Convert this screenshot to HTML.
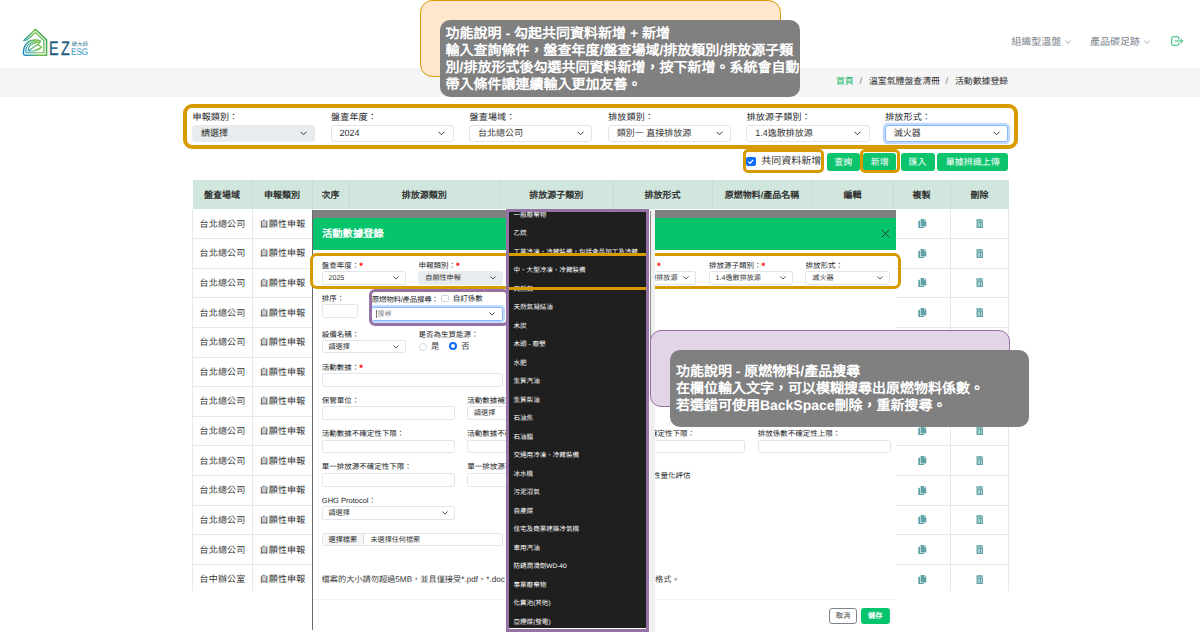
<!DOCTYPE html>
<html lang="zh-TW"><head><meta charset="utf-8"><title>活動數據登錄</title>
<style>
*{box-sizing:border-box;margin:0;padding:0}
html,body{width:1200px;height:632px;overflow:hidden;background:#fff}
body{position:relative;font-family:"Liberation Sans",sans-serif;color:#212529;font-size:9px;line-height:1;text-rendering:geometricPrecision}
.a{position:absolute;white-space:nowrap}
.t{position:absolute;white-space:nowrap;overflow:hidden}
.lbl{position:absolute;white-space:nowrap;font-size:9px;line-height:11px;height:11px;color:#212529;letter-spacing:.15px}
.sel{position:absolute;height:17px;border:1px solid #e1e5e9;border-radius:3px;background:#fff;font-size:9px;line-height:15px;padding-left:8px;white-space:nowrap;overflow:hidden;color:#333}
.sel.dis{background:#e9ecef;border-color:#e9ecef}
.chev{position:absolute;right:7.5px;top:50%;width:7px;height:5px;margin-top:-2px}
.btn{position:absolute;top:152.5px;height:18px;border-radius:3px;background:#0acf83;background:#0bc46c;color:#fff;font-size:9px;line-height:18px;text-align:center;white-space:nowrap;overflow:hidden}
.th{position:absolute;top:179.5px;height:29px;line-height:30.8px;text-align:center;font-weight:bold;font-size:9px;color:#333;white-space:nowrap;overflow:hidden;border-right:1px solid #c8dcd3}
.td{position:absolute;height:29.6px;line-height:31.4px;text-align:center;font-size:9px;color:#333;white-space:nowrap;overflow:hidden;letter-spacing:.15px}
.hl{position:absolute;left:192.5px;width:816px;height:1px;background:#e6e9ee}
.vl{position:absolute;width:1px;background:#e6e9ee}
.ml{position:absolute;white-space:nowrap;font-size:7.5px;line-height:10px;height:10px;color:#212529;overflow:hidden}
.ml i{color:#f00;font-style:normal;font-weight:bold;font-size:9.5px;line-height:0;position:relative;top:1.2px}
.mi{position:absolute;height:13px;border:1px solid #e1e5e9;border-radius:2.5px;background:#fff;font-size:7.1px;line-height:11px;padding-left:6px;white-space:nowrap;overflow:hidden;color:#333}
.mi.dis{background:#e9ecef;border-color:#e9ecef}
.mi .chev{right:6.2px;width:6px;height:4px}
.it{position:absolute;left:4.5px;white-space:nowrap;font-size:6.55px;line-height:9px;height:9px;color:#fff}
.gold{position:absolute;border:4px solid #d79b00;border-radius:9px}
.callt{position:absolute;background:#808080;border-radius:10px;color:#fff;font-weight:bold;font-size:14px;line-height:17px;white-space:nowrap;overflow:hidden}
.callt div{height:17px;white-space:nowrap}
</style></head><body>

<!-- logo -->
<svg class="a" style="left:20px;top:26px;width:32px;height:32px" viewBox="20 26 32 32">
<defs><linearGradient id="lg" gradientUnits="userSpaceOnUse" x1="22" y1="48" x2="47" y2="40"><stop offset="0" stop-color="#2688c8"/><stop offset=".3" stop-color="#3aa890"/><stop offset=".6" stop-color="#74c043"/><stop offset="1" stop-color="#35a052"/></linearGradient></defs>
<path d="M23.9 40.5 L35.44 29.4 L46.55 39.9 L46.55 55.35 L25.6 55.35 Q23.2 55.35 23.4 52.3 Q23.8 45.2 28.3 41.8 Q31.2 39.9 36.2 40.1 Q39 40.3 40.6 41.3" fill="none" stroke="url(#lg)" stroke-width="1.5" stroke-linejoin="round" stroke-linecap="round"/>
<path d="M24.2 40.45 L27 39.9 L35.44 32.7 L43.9 40.6 L43.9 52.7 L26.7 52.7 Q25.5 52.7 25.8 50 Q26.6 44.8 31.4 42.5 Q34 41.500 37.2 41.600" fill="none" stroke="url(#lg)" stroke-width="1.15" stroke-linejoin="round" stroke-linecap="round"/>
<path d="M28 50.2 Q28.800 44.6 34.2 43.2 Q37.4 42.500 40.2 41.700 Q39.200 43.600 37.5 44.500 L41.700 47.300 Q38.200 50.300 35 50.800 L28.6 51 M28.3 50.600 Q33.200 47.800 37.5 44.500 M34.8 50.800 Q38 48.800 41.700 47.300" fill="none" stroke="url(#lg)" stroke-width="1.05" stroke-linejoin="round" stroke-linecap="round"/>
</svg>
<div class="a" style="left:49.3px;top:38.8px;font-size:19.5px;line-height:20px;color:#1d5a7c;letter-spacing:3.2px;transform:scaleX(.74);transform-origin:0 0;-webkit-text-stroke:.3px #1d5a7c">EZ</div>
<div class="a" style="left:71.6px;top:42px;font-size:5.5px;line-height:6px;color:#3a7f95;letter-spacing:0">碳大師</div>
<div class="a" style="left:71.3px;top:48.2px;font-size:9.6px;line-height:10px;color:#2d94b8;letter-spacing:-.1px;transform:scaleX(.86);transform-origin:0 0">ESG</div>

<div class="a" style="left:1011.3px;top:36.5px;font-size:10px;line-height:12px;color:#7b838b">組織型溫盤</div>
<svg class="a" style="left:1065.3px;top:39.8px;width:6.4px;height:4.2px" viewBox="0 0 12 8"><path d="M1 1 L6 6.5 L11 1" fill="none" stroke="#8a9198" stroke-width="1.4"/></svg>
<div class="a" style="left:1090px;top:36.5px;font-size:10px;line-height:12px;color:#7b838b">產品碳足跡</div>
<svg class="a" style="left:1143.8px;top:39.8px;width:6.4px;height:4.2px" viewBox="0 0 12 8"><path d="M1 1 L6 6.5 L11 1" fill="none" stroke="#8a9198" stroke-width="1.4"/></svg>
<svg class="a" style="left:1171px;top:36px;width:12.5px;height:10px" viewBox="0 0 25 20"><path d="M15.5 6 V3.2 Q15.5 1.5 13.8 1.5 H3.2 Q1.5 1.5 1.5 3.2 V16.8 Q1.5 18.5 3.2 18.5 H13.8 Q15.5 18.5 15.5 16.8 V14" fill="none" stroke="#22b86c" stroke-width="2" stroke-linecap="round"/><path d="M8 10 H23 M19.3 6 L23.3 10 L19.3 14" fill="none" stroke="#22b86c" stroke-width="2" stroke-linecap="round" stroke-linejoin="round"/></svg>

<div class="a" style="left:0;top:68.3px;width:1200px;height:28.4px;background:#f5f5f5"></div>
<div class="a" style="left:836px;top:76px;font-size:8.9px;line-height:11px;color:#14b866">首頁</div>
<div class="a" style="left:859.5px;top:76px;font-size:8.9px;line-height:11px;color:#6c757d">/</div>
<div class="a" style="left:869px;top:76px;font-size:8.9px;line-height:11px;color:#333">溫室氣體盤查清冊</div>
<div class="a" style="left:945.5px;top:76px;font-size:8.9px;line-height:11px;color:#6c757d">/</div>
<div class="a" style="left:955px;top:76px;font-size:8.9px;line-height:11px;color:#333">活動數據登錄</div>

<div class="lbl" style="left:192.5px;top:112px">申報類別：</div>
<div class="sel dis" style="left:192.0px;top:124.8px;width:123.4px">請選擇<svg class="chev" viewBox="0 0 14 9"><path d="M1.5 1.5 L7 7 L12.5 1.5" fill="none" stroke="#343a40" stroke-width="2" stroke-linecap="round" stroke-linejoin="round"/></svg></div>
<div class="lbl" style="left:331.1px;top:112px">盤查年度：</div>
<div class="sel" style="left:330.6px;top:124.8px;width:123.4px">2024<svg class="chev" viewBox="0 0 14 9"><path d="M1.5 1.5 L7 7 L12.5 1.5" fill="none" stroke="#343a40" stroke-width="2" stroke-linecap="round" stroke-linejoin="round"/></svg></div>
<div class="lbl" style="left:469.6px;top:112px">盤查場域：</div>
<div class="sel" style="left:469.1px;top:124.8px;width:123.4px">台北總公司<svg class="chev" viewBox="0 0 14 9"><path d="M1.5 1.5 L7 7 L12.5 1.5" fill="none" stroke="#343a40" stroke-width="2" stroke-linecap="round" stroke-linejoin="round"/></svg></div>
<div class="lbl" style="left:608.2px;top:112px">排放類別：</div>
<div class="sel" style="left:607.7px;top:124.8px;width:123.4px">類別一 直接排放源<svg class="chev" viewBox="0 0 14 9"><path d="M1.5 1.5 L7 7 L12.5 1.5" fill="none" stroke="#343a40" stroke-width="2" stroke-linecap="round" stroke-linejoin="round"/></svg></div>
<div class="lbl" style="left:746.7px;top:112px">排放源子類別：</div>
<div class="sel" style="left:746.2px;top:124.8px;width:123.4px">1.4逸散排放源<svg class="chev" viewBox="0 0 14 9"><path d="M1.5 1.5 L7 7 L12.5 1.5" fill="none" stroke="#343a40" stroke-width="2" stroke-linecap="round" stroke-linejoin="round"/></svg></div>
<div class="lbl" style="left:885.2px;top:112px">排放形式：</div>
<div class="sel" style="left:884.8px;top:124.8px;width:123.4px;border-color:#86b7fe;box-shadow:0 0 0 2.2px rgba(13,110,253,.25)">滅火器<svg class="chev" viewBox="0 0 14 9"><path d="M1.5 1.5 L7 7 L12.5 1.5" fill="none" stroke="#343a40" stroke-width="2" stroke-linecap="round" stroke-linejoin="round"/></svg></div>
<div class="a" style="left:746.3px;top:156.8px;width:9.4px;height:9.4px;border-radius:2px;background:#0d6efd"></div>
<svg class="a" style="left:746.3px;top:156.8px;width:9.4px;height:9.4px" viewBox="0 0 20 20"><path d="M5.5 10.3 L8.7 13.5 L14.6 6.8" fill="none" stroke="#fff" stroke-width="2.6" stroke-linecap="round" stroke-linejoin="round"/></svg>
<div class="a" style="left:761.2px;top:156.2px;font-size:10px;line-height:12px;color:#333">共同資料新增</div>
<div class="btn" style="left:826.8px;width:32.8px">查詢</div>
<div class="btn" style="left:863.3px;width:33px">新增</div>
<div class="btn" style="left:900.5px;width:34px">匯入</div>
<div class="btn" style="left:937px;width:71.3px">單據辨識上傳</div>

<div class="a" style="left:192.5px;top:179.5px;width:816.2px;height:29.1px;background:#d1e7dd"></div>
<div class="th" style="left:192.5px;width:60.0px">盤查場域</div>
<div class="th" style="left:252.5px;width:60.0px">申報類別</div>
<div class="th" style="left:312.5px;width:37.0px">次序</div>
<div class="th" style="left:349.5px;width:150.5px">排放源類別</div>
<div class="th" style="left:500px;width:113.5px">排放源子類別</div>
<div class="th" style="left:613.5px;width:99.0px">排放形式</div>
<div class="th" style="left:712.5px;width:100.0px">原燃物料/產品名稱</div>
<div class="th" style="left:812.5px;width:81.0px">編輯</div>
<div class="th" style="left:893.5px;width:57.0px">複製</div>
<div class="th" style="left:950.5px;width:58.2px;border-right:none">刪除</div>
<div class="td" style="left:192.5px;top:208.6px;width:60px">台北總公司</div>
<div class="td" style="left:252.5px;top:208.6px;width:60px">自願性申報</div>
<div class="hl" style="top:238.0px"></div>
<svg class="a" style="left:918px;top:218.9px;width:8.6px;height:9.2px" viewBox="0 0 448 512"><path fill="#5fa2a6" d="M320 448v40c0 13.3-10.7 24-24 24H24c-13.3 0-24-10.7-24-24V120c0-13.3 10.7-24 24-24h72v296c0 30.9 25.1 56 56 56h168zm0-344V0H152c-13.3 0-24 10.700-24 24v368c0 13.3 10.700 24 24 24h272c13.300 0 24-10.700 24-24V128H344c-13.200 0-24-10.800-24-24zm121-31L375 7A24 24 0 0 0 358.100 0H352v96h96v-6.100a24 24 0 0 0-7-16.900z"/></svg>
<svg class="a" style="left:975.7px;top:218.9px;width:7.500px;height:9.2px" preserveAspectRatio="none" viewBox="0 0 448 512"><path fill="#5fa2a6" d="M32 464a48 48 0 0 0 48 48h288a48 48 0 0 0 48-48V128H32zm272-256a16 16 0 0 1 32 0v224a16 16 0 0 1-32 0zm-96 0a16 16 0 0 1 32 0v224a16 16 0 0 1-32 0zm-96 0a16 16 0 0 1 32 0v224a16 16 0 0 1-32 0zM432 32H312l-9.400-18.700A24 24 0 0 0 281.100 0H166.800a23.720 23.720 0 0 0-21.400 13.300L136 32H16A16 16 0 0 0 0 48v32a16 16 0 0 0 16 16h416a16 16 0 0 0 16-16V48a16 16 0 0 0-16-16z"/></svg>
<div class="td" style="left:192.5px;top:238.2px;width:60px">台北總公司</div>
<div class="td" style="left:252.5px;top:238.2px;width:60px">自願性申報</div>
<div class="hl" style="top:267.7px"></div>
<svg class="a" style="left:918px;top:248.5px;width:8.6px;height:9.2px" viewBox="0 0 448 512"><path fill="#5fa2a6" d="M320 448v40c0 13.3-10.7 24-24 24H24c-13.3 0-24-10.7-24-24V120c0-13.3 10.7-24 24-24h72v296c0 30.9 25.1 56 56 56h168zm0-344V0H152c-13.3 0-24 10.700-24 24v368c0 13.3 10.700 24 24 24h272c13.300 0 24-10.700 24-24V128H344c-13.200 0-24-10.800-24-24zm121-31L375 7A24 24 0 0 0 358.100 0H352v96h96v-6.100a24 24 0 0 0-7-16.900z"/></svg>
<svg class="a" style="left:975.7px;top:248.5px;width:7.500px;height:9.2px" preserveAspectRatio="none" viewBox="0 0 448 512"><path fill="#5fa2a6" d="M32 464a48 48 0 0 0 48 48h288a48 48 0 0 0 48-48V128H32zm272-256a16 16 0 0 1 32 0v224a16 16 0 0 1-32 0zm-96 0a16 16 0 0 1 32 0v224a16 16 0 0 1-32 0zm-96 0a16 16 0 0 1 32 0v224a16 16 0 0 1-32 0zM432 32H312l-9.400-18.700A24 24 0 0 0 281.100 0H166.800a23.720 23.720 0 0 0-21.400 13.300L136 32H16A16 16 0 0 0 0 48v32a16 16 0 0 0 16 16h416a16 16 0 0 0 16-16V48a16 16 0 0 0-16-16z"/></svg>
<div class="td" style="left:192.5px;top:267.9px;width:60px">台北總公司</div>
<div class="td" style="left:252.5px;top:267.9px;width:60px">自願性申報</div>
<div class="hl" style="top:297.3px"></div>
<svg class="a" style="left:918px;top:278.2px;width:8.6px;height:9.2px" viewBox="0 0 448 512"><path fill="#5fa2a6" d="M320 448v40c0 13.3-10.7 24-24 24H24c-13.3 0-24-10.7-24-24V120c0-13.3 10.7-24 24-24h72v296c0 30.9 25.1 56 56 56h168zm0-344V0H152c-13.3 0-24 10.700-24 24v368c0 13.3 10.700 24 24 24h272c13.300 0 24-10.700 24-24V128H344c-13.200 0-24-10.800-24-24zm121-31L375 7A24 24 0 0 0 358.100 0H352v96h96v-6.100a24 24 0 0 0-7-16.900z"/></svg>
<svg class="a" style="left:975.7px;top:278.2px;width:7.500px;height:9.2px" preserveAspectRatio="none" viewBox="0 0 448 512"><path fill="#5fa2a6" d="M32 464a48 48 0 0 0 48 48h288a48 48 0 0 0 48-48V128H32zm272-256a16 16 0 0 1 32 0v224a16 16 0 0 1-32 0zm-96 0a16 16 0 0 1 32 0v224a16 16 0 0 1-32 0zm-96 0a16 16 0 0 1 32 0v224a16 16 0 0 1-32 0zM432 32H312l-9.400-18.700A24 24 0 0 0 281.100 0H166.800a23.720 23.720 0 0 0-21.400 13.300L136 32H16A16 16 0 0 0 0 48v32a16 16 0 0 0 16 16h416a16 16 0 0 0 16-16V48a16 16 0 0 0-16-16z"/></svg>
<div class="td" style="left:192.5px;top:297.5px;width:60px">台北總公司</div>
<div class="td" style="left:252.5px;top:297.5px;width:60px">自願性申報</div>
<div class="hl" style="top:326.9px"></div>
<svg class="a" style="left:918px;top:307.8px;width:8.6px;height:9.2px" viewBox="0 0 448 512"><path fill="#5fa2a6" d="M320 448v40c0 13.3-10.7 24-24 24H24c-13.3 0-24-10.7-24-24V120c0-13.3 10.7-24 24-24h72v296c0 30.9 25.1 56 56 56h168zm0-344V0H152c-13.3 0-24 10.700-24 24v368c0 13.3 10.700 24 24 24h272c13.300 0 24-10.700 24-24V128H344c-13.200 0-24-10.800-24-24zm121-31L375 7A24 24 0 0 0 358.100 0H352v96h96v-6.100a24 24 0 0 0-7-16.900z"/></svg>
<svg class="a" style="left:975.7px;top:307.8px;width:7.500px;height:9.2px" preserveAspectRatio="none" viewBox="0 0 448 512"><path fill="#5fa2a6" d="M32 464a48 48 0 0 0 48 48h288a48 48 0 0 0 48-48V128H32zm272-256a16 16 0 0 1 32 0v224a16 16 0 0 1-32 0zm-96 0a16 16 0 0 1 32 0v224a16 16 0 0 1-32 0zm-96 0a16 16 0 0 1 32 0v224a16 16 0 0 1-32 0zM432 32H312l-9.400-18.700A24 24 0 0 0 281.100 0H166.800a23.720 23.720 0 0 0-21.400 13.300L136 32H16A16 16 0 0 0 0 48v32a16 16 0 0 0 16 16h416a16 16 0 0 0 16-16V48a16 16 0 0 0-16-16z"/></svg>
<div class="td" style="left:192.5px;top:327.1px;width:60px">台北總公司</div>
<div class="td" style="left:252.5px;top:327.1px;width:60px">自願性申報</div>
<div class="hl" style="top:356.6px"></div>
<svg class="a" style="left:918px;top:337.4px;width:8.6px;height:9.2px" viewBox="0 0 448 512"><path fill="#5fa2a6" d="M320 448v40c0 13.3-10.7 24-24 24H24c-13.3 0-24-10.7-24-24V120c0-13.3 10.7-24 24-24h72v296c0 30.9 25.1 56 56 56h168zm0-344V0H152c-13.3 0-24 10.700-24 24v368c0 13.3 10.700 24 24 24h272c13.300 0 24-10.700 24-24V128H344c-13.200 0-24-10.800-24-24zm121-31L375 7A24 24 0 0 0 358.100 0H352v96h96v-6.100a24 24 0 0 0-7-16.900z"/></svg>
<svg class="a" style="left:975.7px;top:337.4px;width:7.500px;height:9.2px" preserveAspectRatio="none" viewBox="0 0 448 512"><path fill="#5fa2a6" d="M32 464a48 48 0 0 0 48 48h288a48 48 0 0 0 48-48V128H32zm272-256a16 16 0 0 1 32 0v224a16 16 0 0 1-32 0zm-96 0a16 16 0 0 1 32 0v224a16 16 0 0 1-32 0zm-96 0a16 16 0 0 1 32 0v224a16 16 0 0 1-32 0zM432 32H312l-9.400-18.700A24 24 0 0 0 281.100 0H166.800a23.720 23.720 0 0 0-21.400 13.300L136 32H16A16 16 0 0 0 0 48v32a16 16 0 0 0 16 16h416a16 16 0 0 0 16-16V48a16 16 0 0 0-16-16z"/></svg>
<div class="td" style="left:192.5px;top:356.8px;width:60px">台北總公司</div>
<div class="td" style="left:252.5px;top:356.8px;width:60px">自願性申報</div>
<div class="hl" style="top:386.2px"></div>
<svg class="a" style="left:918px;top:367.1px;width:8.6px;height:9.2px" viewBox="0 0 448 512"><path fill="#5fa2a6" d="M320 448v40c0 13.3-10.7 24-24 24H24c-13.3 0-24-10.7-24-24V120c0-13.3 10.7-24 24-24h72v296c0 30.9 25.1 56 56 56h168zm0-344V0H152c-13.3 0-24 10.700-24 24v368c0 13.3 10.700 24 24 24h272c13.300 0 24-10.700 24-24V128H344c-13.200 0-24-10.800-24-24zm121-31L375 7A24 24 0 0 0 358.100 0H352v96h96v-6.100a24 24 0 0 0-7-16.900z"/></svg>
<svg class="a" style="left:975.7px;top:367.1px;width:7.500px;height:9.2px" preserveAspectRatio="none" viewBox="0 0 448 512"><path fill="#5fa2a6" d="M32 464a48 48 0 0 0 48 48h288a48 48 0 0 0 48-48V128H32zm272-256a16 16 0 0 1 32 0v224a16 16 0 0 1-32 0zm-96 0a16 16 0 0 1 32 0v224a16 16 0 0 1-32 0zm-96 0a16 16 0 0 1 32 0v224a16 16 0 0 1-32 0zM432 32H312l-9.400-18.700A24 24 0 0 0 281.100 0H166.800a23.720 23.720 0 0 0-21.400 13.300L136 32H16A16 16 0 0 0 0 48v32a16 16 0 0 0 16 16h416a16 16 0 0 0 16-16V48a16 16 0 0 0-16-16z"/></svg>
<div class="td" style="left:192.5px;top:386.4px;width:60px">台北總公司</div>
<div class="td" style="left:252.5px;top:386.4px;width:60px">自願性申報</div>
<div class="hl" style="top:415.8px"></div>
<svg class="a" style="left:918px;top:396.7px;width:8.6px;height:9.2px" viewBox="0 0 448 512"><path fill="#5fa2a6" d="M320 448v40c0 13.3-10.7 24-24 24H24c-13.3 0-24-10.7-24-24V120c0-13.3 10.7-24 24-24h72v296c0 30.9 25.1 56 56 56h168zm0-344V0H152c-13.3 0-24 10.700-24 24v368c0 13.3 10.700 24 24 24h272c13.300 0 24-10.700 24-24V128H344c-13.200 0-24-10.800-24-24zm121-31L375 7A24 24 0 0 0 358.100 0H352v96h96v-6.100a24 24 0 0 0-7-16.900z"/></svg>
<svg class="a" style="left:975.7px;top:396.7px;width:7.500px;height:9.2px" preserveAspectRatio="none" viewBox="0 0 448 512"><path fill="#5fa2a6" d="M32 464a48 48 0 0 0 48 48h288a48 48 0 0 0 48-48V128H32zm272-256a16 16 0 0 1 32 0v224a16 16 0 0 1-32 0zm-96 0a16 16 0 0 1 32 0v224a16 16 0 0 1-32 0zm-96 0a16 16 0 0 1 32 0v224a16 16 0 0 1-32 0zM432 32H312l-9.400-18.700A24 24 0 0 0 281.100 0H166.800a23.720 23.720 0 0 0-21.400 13.300L136 32H16A16 16 0 0 0 0 48v32a16 16 0 0 0 16 16h416a16 16 0 0 0 16-16V48a16 16 0 0 0-16-16z"/></svg>
<div class="td" style="left:192.5px;top:416.0px;width:60px">台北總公司</div>
<div class="td" style="left:252.5px;top:416.0px;width:60px">自願性申報</div>
<div class="hl" style="top:445.4px"></div>
<svg class="a" style="left:918px;top:426.3px;width:8.6px;height:9.2px" viewBox="0 0 448 512"><path fill="#5fa2a6" d="M320 448v40c0 13.3-10.7 24-24 24H24c-13.3 0-24-10.7-24-24V120c0-13.3 10.7-24 24-24h72v296c0 30.9 25.1 56 56 56h168zm0-344V0H152c-13.3 0-24 10.700-24 24v368c0 13.3 10.700 24 24 24h272c13.300 0 24-10.700 24-24V128H344c-13.200 0-24-10.800-24-24zm121-31L375 7A24 24 0 0 0 358.100 0H352v96h96v-6.100a24 24 0 0 0-7-16.900z"/></svg>
<svg class="a" style="left:975.7px;top:426.3px;width:7.500px;height:9.2px" preserveAspectRatio="none" viewBox="0 0 448 512"><path fill="#5fa2a6" d="M32 464a48 48 0 0 0 48 48h288a48 48 0 0 0 48-48V128H32zm272-256a16 16 0 0 1 32 0v224a16 16 0 0 1-32 0zm-96 0a16 16 0 0 1 32 0v224a16 16 0 0 1-32 0zm-96 0a16 16 0 0 1 32 0v224a16 16 0 0 1-32 0zM432 32H312l-9.400-18.700A24 24 0 0 0 281.100 0H166.800a23.720 23.720 0 0 0-21.400 13.300L136 32H16A16 16 0 0 0 0 48v32a16 16 0 0 0 16 16h416a16 16 0 0 0 16-16V48a16 16 0 0 0-16-16z"/></svg>
<div class="td" style="left:192.5px;top:445.6px;width:60px">台北總公司</div>
<div class="td" style="left:252.5px;top:445.6px;width:60px">自願性申報</div>
<div class="hl" style="top:475.1px"></div>
<svg class="a" style="left:918px;top:455.9px;width:8.6px;height:9.2px" viewBox="0 0 448 512"><path fill="#5fa2a6" d="M320 448v40c0 13.3-10.7 24-24 24H24c-13.3 0-24-10.7-24-24V120c0-13.3 10.7-24 24-24h72v296c0 30.9 25.1 56 56 56h168zm0-344V0H152c-13.3 0-24 10.700-24 24v368c0 13.3 10.700 24 24 24h272c13.300 0 24-10.700 24-24V128H344c-13.200 0-24-10.800-24-24zm121-31L375 7A24 24 0 0 0 358.100 0H352v96h96v-6.100a24 24 0 0 0-7-16.900z"/></svg>
<svg class="a" style="left:975.7px;top:455.9px;width:7.500px;height:9.2px" preserveAspectRatio="none" viewBox="0 0 448 512"><path fill="#5fa2a6" d="M32 464a48 48 0 0 0 48 48h288a48 48 0 0 0 48-48V128H32zm272-256a16 16 0 0 1 32 0v224a16 16 0 0 1-32 0zm-96 0a16 16 0 0 1 32 0v224a16 16 0 0 1-32 0zm-96 0a16 16 0 0 1 32 0v224a16 16 0 0 1-32 0zM432 32H312l-9.400-18.700A24 24 0 0 0 281.100 0H166.800a23.720 23.720 0 0 0-21.400 13.300L136 32H16A16 16 0 0 0 0 48v32a16 16 0 0 0 16 16h416a16 16 0 0 0 16-16V48a16 16 0 0 0-16-16z"/></svg>
<div class="td" style="left:192.5px;top:475.3px;width:60px">台北總公司</div>
<div class="td" style="left:252.5px;top:475.3px;width:60px">自願性申報</div>
<div class="hl" style="top:504.7px"></div>
<svg class="a" style="left:918px;top:485.6px;width:8.6px;height:9.2px" viewBox="0 0 448 512"><path fill="#5fa2a6" d="M320 448v40c0 13.3-10.7 24-24 24H24c-13.3 0-24-10.7-24-24V120c0-13.3 10.7-24 24-24h72v296c0 30.9 25.1 56 56 56h168zm0-344V0H152c-13.3 0-24 10.700-24 24v368c0 13.3 10.700 24 24 24h272c13.300 0 24-10.700 24-24V128H344c-13.200 0-24-10.800-24-24zm121-31L375 7A24 24 0 0 0 358.100 0H352v96h96v-6.100a24 24 0 0 0-7-16.900z"/></svg>
<svg class="a" style="left:975.7px;top:485.6px;width:7.500px;height:9.2px" preserveAspectRatio="none" viewBox="0 0 448 512"><path fill="#5fa2a6" d="M32 464a48 48 0 0 0 48 48h288a48 48 0 0 0 48-48V128H32zm272-256a16 16 0 0 1 32 0v224a16 16 0 0 1-32 0zm-96 0a16 16 0 0 1 32 0v224a16 16 0 0 1-32 0zm-96 0a16 16 0 0 1 32 0v224a16 16 0 0 1-32 0zM432 32H312l-9.400-18.700A24 24 0 0 0 281.100 0H166.800a23.720 23.720 0 0 0-21.400 13.300L136 32H16A16 16 0 0 0 0 48v32a16 16 0 0 0 16 16h416a16 16 0 0 0 16-16V48a16 16 0 0 0-16-16z"/></svg>
<div class="td" style="left:192.5px;top:504.9px;width:60px">台北總公司</div>
<div class="td" style="left:252.5px;top:504.9px;width:60px">自願性申報</div>
<div class="hl" style="top:534.3px"></div>
<svg class="a" style="left:918px;top:515.2px;width:8.6px;height:9.2px" viewBox="0 0 448 512"><path fill="#5fa2a6" d="M320 448v40c0 13.3-10.7 24-24 24H24c-13.3 0-24-10.7-24-24V120c0-13.3 10.7-24 24-24h72v296c0 30.9 25.1 56 56 56h168zm0-344V0H152c-13.3 0-24 10.700-24 24v368c0 13.3 10.700 24 24 24h272c13.300 0 24-10.700 24-24V128H344c-13.200 0-24-10.800-24-24zm121-31L375 7A24 24 0 0 0 358.100 0H352v96h96v-6.100a24 24 0 0 0-7-16.900z"/></svg>
<svg class="a" style="left:975.7px;top:515.2px;width:7.500px;height:9.2px" preserveAspectRatio="none" viewBox="0 0 448 512"><path fill="#5fa2a6" d="M32 464a48 48 0 0 0 48 48h288a48 48 0 0 0 48-48V128H32zm272-256a16 16 0 0 1 32 0v224a16 16 0 0 1-32 0zm-96 0a16 16 0 0 1 32 0v224a16 16 0 0 1-32 0zm-96 0a16 16 0 0 1 32 0v224a16 16 0 0 1-32 0zM432 32H312l-9.400-18.700A24 24 0 0 0 281.100 0H166.800a23.720 23.720 0 0 0-21.400 13.300L136 32H16A16 16 0 0 0 0 48v32a16 16 0 0 0 16 16h416a16 16 0 0 0 16-16V48a16 16 0 0 0-16-16z"/></svg>
<div class="td" style="left:192.5px;top:534.5px;width:60px">台北總公司</div>
<div class="td" style="left:252.5px;top:534.5px;width:60px">自願性申報</div>
<div class="hl" style="top:564.0px"></div>
<svg class="a" style="left:918px;top:544.8px;width:8.6px;height:9.2px" viewBox="0 0 448 512"><path fill="#5fa2a6" d="M320 448v40c0 13.3-10.7 24-24 24H24c-13.3 0-24-10.7-24-24V120c0-13.3 10.7-24 24-24h72v296c0 30.9 25.1 56 56 56h168zm0-344V0H152c-13.3 0-24 10.700-24 24v368c0 13.3 10.700 24 24 24h272c13.300 0 24-10.700 24-24V128H344c-13.200 0-24-10.800-24-24zm121-31L375 7A24 24 0 0 0 358.100 0H352v96h96v-6.100a24 24 0 0 0-7-16.900z"/></svg>
<svg class="a" style="left:975.7px;top:544.8px;width:7.500px;height:9.2px" preserveAspectRatio="none" viewBox="0 0 448 512"><path fill="#5fa2a6" d="M32 464a48 48 0 0 0 48 48h288a48 48 0 0 0 48-48V128H32zm272-256a16 16 0 0 1 32 0v224a16 16 0 0 1-32 0zm-96 0a16 16 0 0 1 32 0v224a16 16 0 0 1-32 0zm-96 0a16 16 0 0 1 32 0v224a16 16 0 0 1-32 0zM432 32H312l-9.400-18.700A24 24 0 0 0 281.100 0H166.800a23.720 23.720 0 0 0-21.400 13.300L136 32H16A16 16 0 0 0 0 48v32a16 16 0 0 0 16 16h416a16 16 0 0 0 16-16V48a16 16 0 0 0-16-16z"/></svg>
<div class="td" style="left:192.5px;top:564.2px;width:60px;height:26.4px">台中辦公室</div>
<div class="td" style="left:252.5px;top:564.2px;width:60px;height:26.4px">自願性申報</div>
<svg class="a" style="left:918px;top:574.5px;width:8.6px;height:9.2px" viewBox="0 0 448 512"><path fill="#5fa2a6" d="M320 448v40c0 13.3-10.7 24-24 24H24c-13.3 0-24-10.7-24-24V120c0-13.3 10.7-24 24-24h72v296c0 30.9 25.1 56 56 56h168zm0-344V0H152c-13.3 0-24 10.700-24 24v368c0 13.3 10.700 24 24 24h272c13.300 0 24-10.700 24-24V128H344c-13.200 0-24-10.800-24-24zm121-31L375 7A24 24 0 0 0 358.100 0H352v96h96v-6.100a24 24 0 0 0-7-16.900z"/></svg>
<svg class="a" style="left:975.7px;top:574.5px;width:7.500px;height:9.2px" preserveAspectRatio="none" viewBox="0 0 448 512"><path fill="#5fa2a6" d="M32 464a48 48 0 0 0 48 48h288a48 48 0 0 0 48-48V128H32zm272-256a16 16 0 0 1 32 0v224a16 16 0 0 1-32 0zm-96 0a16 16 0 0 1 32 0v224a16 16 0 0 1-32 0zm-96 0a16 16 0 0 1 32 0v224a16 16 0 0 1-32 0zM432 32H312l-9.400-18.700A24 24 0 0 0 281.100 0H166.800a23.720 23.720 0 0 0-21.400 13.300L136 32H16A16 16 0 0 0 0 48v32a16 16 0 0 0 16 16h416a16 16 0 0 0 16-16V48a16 16 0 0 0-16-16z"/></svg>
<div class="vl" style="left:192.0px;top:208.6px;height:382px"></div>
<div class="vl" style="left:252.0px;top:208.6px;height:382px"></div>
<div class="vl" style="left:312.0px;top:208.6px;height:382px"></div>
<div class="vl" style="left:349.0px;top:208.6px;height:382px"></div>
<div class="vl" style="left:499.5px;top:208.6px;height:382px"></div>
<div class="vl" style="left:613.0px;top:208.6px;height:382px"></div>
<div class="vl" style="left:712.0px;top:208.6px;height:382px"></div>
<div class="vl" style="left:812.0px;top:208.6px;height:382px"></div>
<div class="vl" style="left:893.0px;top:208.6px;height:382px"></div>
<div class="vl" style="left:950.0px;top:208.6px;height:382px"></div>
<div class="vl" style="left:1008.2px;top:208.6px;height:382px"></div>
<div class="a" style="left:180px;top:590.6px;width:840px;height:42px;background:#fff"></div>
<div class="a" id="modal" style="left:312px;top:210px;width:584px;height:422px;background:#fff;overflow:hidden">
<div class="a" style="left:0;top:0;width:584.5px;height:12px;background:#808080"></div>
<div class="a" style="left:0;top:0;width:1.2px;height:420px;background:#6b6b6b"></div>
<div class="a" style="left:1px;top:7.6px;width:583.5px;height:32.2px;background:#05c46b;border-radius:3px 0 0 0"></div>
<div class="a" style="left:10px;top:17.800px;font-size:10.3px;line-height:13px;font-weight:bold;color:#fff">活動數據登錄</div>
<svg class="a" style="left:568.5px;top:19px;width:9.2px;height:9.2px" viewBox="0 0 20 20"><path d="M1.5 1.5 L18.500 18.500 M18.500 1.500 L1.500 18.500" stroke="#2b3a33" stroke-width="2" fill="none"/></svg>

<div class="ml" style="left:9.8px;top:50.5px">盤查年度：<i>*</i></div>
<div class="mi" style="left:9.5px;top:61.0px;width:84.4px;height:13.7px;line-height:13.5px">2025<svg class="chev" viewBox="0 0 14 9"><path d="M1.5 1.5 L7 7 L12.5 1.5" fill="none" stroke="#343a40" stroke-width="2" stroke-linecap="round" stroke-linejoin="round"/></svg></div>
<div class="ml" style="left:106.6px;top:50.5px">申報類別：<i>*</i></div>
<div class="mi dis" style="left:106.3px;top:61.0px;width:84.4px;height:13.7px;line-height:13.5px">自願性申報<svg class="chev" viewBox="0 0 14 9"><path d="M1.5 1.5 L7 7 L12.5 1.5" fill="none" stroke="#343a40" stroke-width="2" stroke-linecap="round" stroke-linejoin="round"/></svg></div>
<div class="ml" style="left:203.3px;top:50.5px">盤查場域：<i>*</i></div>
<div class="mi" style="left:203.0px;top:61.0px;width:84.4px;height:13.7px;line-height:13.5px">台北總公司<svg class="chev" viewBox="0 0 14 9"><path d="M1.5 1.5 L7 7 L12.5 1.5" fill="none" stroke="#343a40" stroke-width="2" stroke-linecap="round" stroke-linejoin="round"/></svg></div>
<div class="ml" style="left:300.1px;top:50.5px">排放源類別：<i>*</i></div>
<div class="mi" style="left:299.8px;top:61.0px;width:84.4px;height:13.7px;line-height:13.5px">類別一 直接排放源<svg class="chev" viewBox="0 0 14 9"><path d="M1.5 1.5 L7 7 L12.5 1.5" fill="none" stroke="#343a40" stroke-width="2" stroke-linecap="round" stroke-linejoin="round"/></svg></div>
<div class="ml" style="left:396.9px;top:50.5px">排放源子類別：<i>*</i></div>
<div class="mi" style="left:396.6px;top:61.0px;width:84.4px;height:13.7px;line-height:13.5px">1.4逸散排放源<svg class="chev" viewBox="0 0 14 9"><path d="M1.5 1.5 L7 7 L12.5 1.5" fill="none" stroke="#343a40" stroke-width="2" stroke-linecap="round" stroke-linejoin="round"/></svg></div>
<div class="ml" style="left:493.6px;top:50.5px">排放形式：</div>
<div class="mi" style="left:493.3px;top:61.0px;width:84.4px;height:13.7px;line-height:13.5px">滅火器<svg class="chev" viewBox="0 0 14 9"><path d="M1.5 1.5 L7 7 L12.5 1.5" fill="none" stroke="#343a40" stroke-width="2" stroke-linecap="round" stroke-linejoin="round"/></svg></div>
<div class="ml" style="left:9.8px;top:84.2px">排序：</div>
<div class="mi" style="left:9.5px;top:94.2px;width:36.0px;height:14.0px;line-height:13.8px"></div>
<div class="ml" style="left:59.8px;top:84.5px;letter-spacing:-.28px">原燃物料/產品搜尋：</div>
<div class="a" style="left:129.4px;top:85.0px;width:7.2px;height:7.2px;border:1px solid #cfd4da;border-radius:1.5px;background:#fff"></div>
<div class="ml" style="left:140.8px;top:84.2px">自訂係數</div>
<div class="mi" style="left:59.0px;top:96.6px;width:131.5px;height:14.1px;line-height:13.9px;border-color:#86b7fe;box-shadow:0 0 0 2px rgba(13,110,253,.25)"><span style="color:#8a9097;border-left:0.700px solid #777;margin-left:-2px;padding-left:0.5px">搜尋</span><svg class="chev" viewBox="0 0 14 9"><path d="M1.5 1.5 L7 7 L12.5 1.5" fill="none" stroke="#343a40" stroke-width="2" stroke-linecap="round" stroke-linejoin="round"/></svg></div>
<div class="ml" style="left:9.8px;top:119.5px">設備名稱：</div>
<div class="mi" style="left:9.5px;top:130.0px;width:84.4px;height:13.3px;line-height:13.1px">請選擇<svg class="chev" viewBox="0 0 14 9"><path d="M1.5 1.5 L7 7 L12.5 1.5" fill="none" stroke="#343a40" stroke-width="2" stroke-linecap="round" stroke-linejoin="round"/></svg></div>
<div class="ml" style="left:106.6px;top:119.5px">是否為生質能源：</div>
<div class="a" style="left:106.6px;top:132.6px;width:8px;height:8px;border:1px solid #d5d9de;border-radius:50%;background:#fff"></div>
<div class="a" style="left:119.0px;top:131.4px;font-size:8.4px;line-height:10px;color:#333">是</div>
<div class="a" style="left:137.2px;top:132.4px;width:8px;height:8px;border:2.3px solid #0d6efd;border-radius:50%;background:#fff"></div>
<div class="a" style="left:149.3px;top:131.4px;font-size:8.4px;line-height:10px;color:#333">否</div>
<div class="ml" style="left:9.8px;top:152.5px">活動數據：<i>*</i></div>
<div class="mi" style="left:9.5px;top:163.0px;width:181.2px;height:13.5px;line-height:13.3px"></div>
<div class="ml" style="left:9.8px;top:185.9px">保管單位：</div>
<div class="mi" style="left:9.5px;top:196.4px;width:133.2px;height:14.0px;line-height:13.8px"></div>
<div class="ml" style="left:155.3px;top:185.9px">活動數據補充說明：</div>
<div class="mi" style="left:155.0px;top:196.4px;width:133.2px;height:14.0px;line-height:13.8px">請選擇<svg class="chev" viewBox="0 0 14 9"><path d="M1.5 1.5 L7 7 L12.5 1.5" fill="none" stroke="#343a40" stroke-width="2" stroke-linecap="round" stroke-linejoin="round"/></svg></div>
<div class="ml" style="left:9.8px;top:219.2px">活動數據不確定性下限：</div>
<div class="mi" style="left:9.5px;top:229.9px;width:133.0px;height:13.5px;line-height:13.3px"></div>
<div class="ml" style="left:155.3px;top:219.2px">活動數據不確定性上限：</div>
<div class="mi" style="left:155.0px;top:229.9px;width:133.0px;height:13.5px;line-height:13.3px"></div>
<div class="ml" style="left:300.5px;top:219.2px">排放係數不確定性下限：</div>
<div class="mi" style="left:300.2px;top:229.9px;width:133.0px;height:13.5px;line-height:13.3px"></div>
<div class="ml" style="left:445.8px;top:219.2px">排放係數不確定性上限：</div>
<div class="mi" style="left:445.5px;top:229.9px;width:133.0px;height:13.5px;line-height:13.3px"></div>
<div class="ml" style="left:9.8px;top:252.4px">單一排放源不確定性下限：</div>
<div class="mi" style="left:9.5px;top:263.1px;width:133.0px;height:13.5px;line-height:13.3px"></div>
<div class="ml" style="left:155.3px;top:252.4px">單一排放源不確定性上限：</div>
<div class="mi" style="left:155.0px;top:263.1px;width:133.0px;height:13.5px;line-height:13.3px"></div>
<div class="ml" style="left:248px;top:260.8px;width:130.5px;text-align:right">排放係數不確定性量化評估</div>
<div class="ml" style="left:9.8px;top:285.6px">GHG Protocol：</div>
<div class="mi" style="left:9.5px;top:296.1px;width:133.2px;height:13.5px;line-height:13.3px">請選擇<svg class="chev" viewBox="0 0 14 9"><path d="M1.5 1.5 L7 7 L12.5 1.5" fill="none" stroke="#343a40" stroke-width="2" stroke-linecap="round" stroke-linejoin="round"/></svg></div>
<div class="mi" style="left:9.5px;top:323.1px;width:181.2px;height:13.3px;line-height:13.1px"><span style="position:absolute;left:0;top:0;width:41.600px;height:100%;background:#f5f6f8;color:#222;border-right:1px solid #dee2e6;text-align:center">選擇檔案</span><span style="margin-left:42.000px">未選擇任何檔案</span></div>
<div class="t" style="left:9.6px;top:363.8px;width:190px;font-size:8.2px;line-height:11px;color:#3a3a3a">檔案的大小請勿超過5MB，並且僅接受*.pdf、*.doc、*.docx、*.xls、*.xlsx</div>
<div class="t" style="left:343.0px;top:363.8px;width:40px;font-size:8.2px;line-height:11px;color:#3a3a3a">格式。</div>
<div class="a" style="left:1px;top:388.8px;width:584px;height:1px;background:#f0f1f2"></div>
<div class="a" style="left:517.0px;top:398.1px;width:28px;height:15.7px;border:1px solid #7c858d;border-radius:3px;background:#fff;font-size:7.3px;line-height:13.7px;text-align:center;color:#333">取消</div>
<div class="a" style="left:549.0px;top:398.1px;width:28.5px;height:15.7px;border-radius:3px;background:#05c46b;font-size:7.3px;line-height:15.7px;text-align:center;color:#fff;font-weight:bold">儲存</div>
</div>
<div class="gold" style="left:309.5px;top:253.3px;width:591.8px;height:36.2px;border-width:3px;border-radius:7px"></div>
<div class="a" style="left:369px;top:289px;width:140px;height:36.600px;border:3px solid #9673a6;border-radius:6px"></div>
<div class="a" style="left:649px;top:209px;width:6.3px;height:423px;background:#f0f0f0"></div>
<div class="a" style="left:649px;top:209px;width:0.8px;height:423px;background:#fafafa"></div>
<div class="a" style="left:650.2px;top:211px;width:0.9px;height:160px;background:#8c8c8c"></div>
<div class="a" style="left:509px;top:212px;width:137px;height:416.4px;background:#1f1f1f;overflow:hidden">
<div class="it" style="top:-1.1px">一般廢棄物</div>
<div class="it" style="top:17.4px">乙烷</div>
<div class="it" style="top:35.9px">工業冷凍、冷藏裝備，包括食品加工及冷藏</div>
<div class="it" style="top:54.3px">中、大型冷凍、冷藏裝備</div>
<div class="it" style="top:72.8px">天然氣</div>
<div class="it" style="top:91.3px">天然氣凝結油</div>
<div class="it" style="top:109.8px">木炭</div>
<div class="it" style="top:128.3px">木頭 - 廢墾</div>
<div class="it" style="top:146.7px">水肥</div>
<div class="it" style="top:165.2px">生質汽油</div>
<div class="it" style="top:183.7px">生質柴油</div>
<div class="it" style="top:202.2px">石油焦</div>
<div class="it" style="top:220.7px">石油腦</div>
<div class="it" style="top:239.1px">交通用冷凍、冷藏裝備</div>
<div class="it" style="top:257.6px">冰水機</div>
<div class="it" style="top:276.1px">污泥沼氣</div>
<div class="it" style="top:294.6px">自產煤</div>
<div class="it" style="top:313.1px">住宅及商業建築冷氣機</div>
<div class="it" style="top:331.5px">車用汽油</div>
<div class="it" style="top:350.0px">防銹潤滑劑WD-40</div>
<div class="it" style="top:368.5px">事業廢棄物</div>
<div class="it" style="top:387.0px">化糞池(其他)</div>
<div class="it" style="top:405.5px">亞煙煤(發電)</div>
<div class="a" style="left:0;top:41.300px;width:137px;height:3px;background:#d79b00"></div>
<div class="a" style="left:0;top:74.500px;width:137px;height:3px;background:#d79b00"></div>
</div>
<div class="a" style="left:506px;top:209px;width:143px;height:423px;border:3.200px solid #9673a6;border-bottom-width:3.600px"></div>
<div class="gold" style="left:183px;top:104.2px;width:835px;height:44.4px"></div>
<div class="gold" style="left:742.5px;top:149.2px;width:81.3px;height:23.8px;border-width:3px;border-radius:5px"></div>
<div class="gold" style="left:860px;top:149.2px;width:40px;height:23.8px;border-width:3px;border-radius:5px"></div>
<div class="a" style="left:420px;top:0px;width:361px;height:77px;background:#ffe6cc;border:1px solid #d79b00;border-radius:12.5px"></div>
<div class="callt" style="left:440px;top:19.700px;width:360px;height:77.300px;padding:5.400px 0 0 5.600px"><div>功能說明 - 勾起共同資料新增 + 新增</div><div>輸入查詢條件，盤查年度/盤查場域/排放類別/排放源子類</div><div>別/排放形式後勾選共同資料新增，按下新增。系統會自動</div><div>帶入條件讓連續輸入更加友善。</div></div>
<div class="a" style="left:650px;top:330px;width:360px;height:77.300px;background:#e1d5e7;border:1px solid #9673a6;border-radius:11px"></div>
<div class="callt" style="left:669.900px;top:350px;width:359.500px;height:76.700px;padding:13.400px 0 0 6.000px;line-height:16.700px"><div style="height:16.700px">功能說明 - 原燃物料/產品搜尋</div><div style="height:16.700px">在欄位輸入文字，可以模糊搜尋出原燃物料係數。</div><div style="height:16.700px">若選錯可使用BackSpace刪除，重新搜尋。</div></div>
</body></html>
